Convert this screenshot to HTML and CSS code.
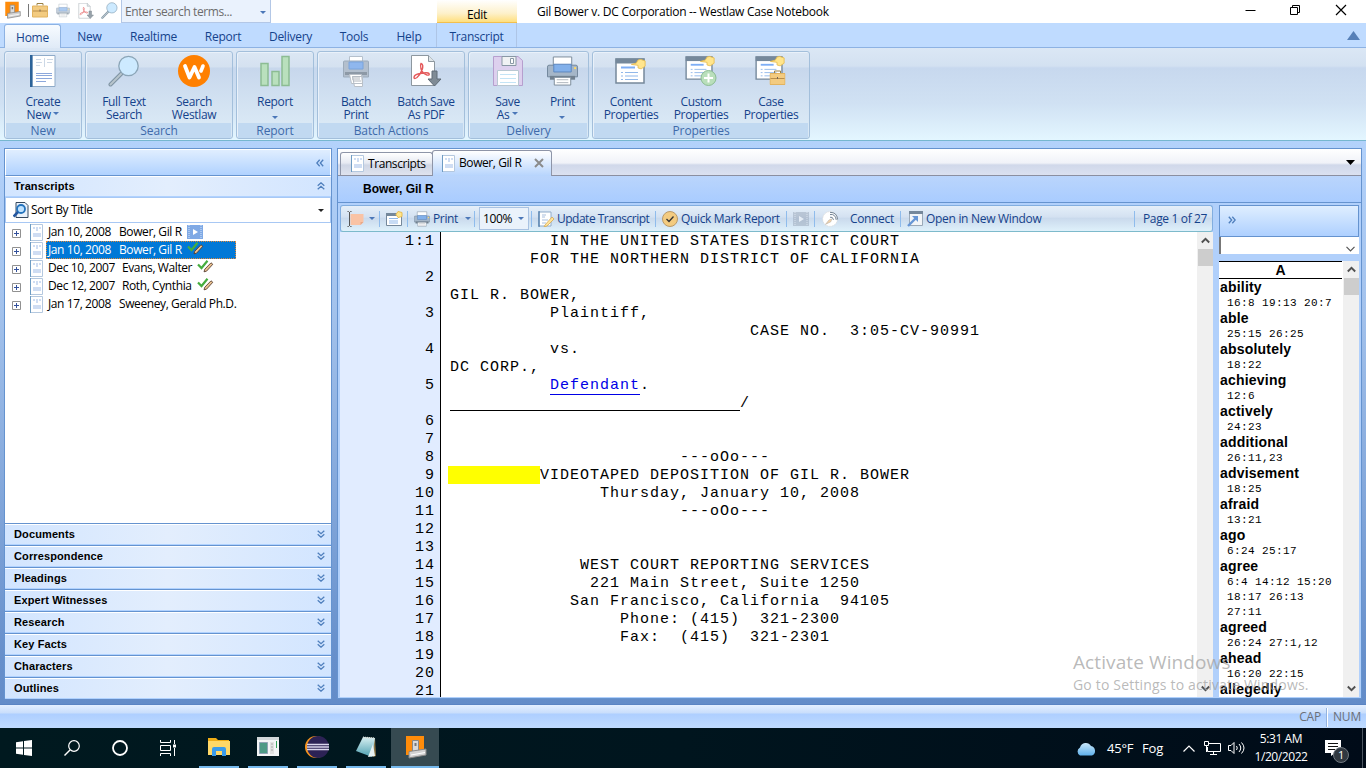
FILE: index.html
```html
<!DOCTYPE html>
<html lang="en">
<head>
<meta charset="utf-8">
<title>Gil Bower v. DC Corporation -- Westlaw Case Notebook</title>
<link rel="stylesheet" href="styles.css">
</head>
<body>
<svg class="defs" width="0" height="0" aria-hidden="true">
<defs>
<linearGradient id="gTeal" x1="0" y1="0" x2="0" y2="1"><stop offset="0" stop-color="#d8f0f2"/><stop offset="1" stop-color="#4c9fb0"/></linearGradient>
<linearGradient id="gCloud" x1="0" y1="0" x2="0" y2="1"><stop offset="0" stop-color="#c9e8fb"/><stop offset="1" stop-color="#5fb0ea"/></linearGradient>
</defs>
<symbol id="app" viewBox="0 0 24 24"><path d="M3 1h18v19H3z" fill="#ff8c0a"/><path d="M9.500 5.500h6v12h-6z" fill="#d9d9d9" stroke="#888"/><path d="M11.500 8h2v3h-2z" fill="#777"/><path d="M6 16.500l17-2.500v6L6 23z" fill="#d2d2d2" stroke="#888"/><path d="M8 20l14-2.500" stroke="#fff"/></symbol>
<symbol id="case" viewBox="0 0 16 16"><path d="M5 3V1h6v2" fill="none" stroke="#9b8145"/><path d="M.5 3.500h15v11H.5z" fill="#f3cb80" stroke="#e2b35f"/><path d="M1 8.500h14" stroke="#b98e4b"/><path d="M7.500 7h1v2h-1z" fill="#765"/></symbol>
<symbol id="printer" viewBox="0 0 32 32"><path d="M6.500 1.500h19v9h-19z" fill="#fff" stroke="#7c8b9a"/><path d="M2 10h28q1.500 0 1.500 2v10H.5V12q0-2 1.500-2z" fill="#a5b6c8" stroke="#72869b"/><path d="M7 9h18v8H7z" fill="#82b0ea" stroke="#5c86bd"/><path d="M3 21h26v4H3z" fill="#71808f"/><path d="M7.500 22.500h17v8h-17z" fill="#fff" stroke="#7c8b9a"/><path d="M10 25h12M10 28h12" stroke="#b0b6bd"/><path d="M28 12h2v2h-2z" fill="#ffd962"/></symbol>
<symbol id="bprinter" viewBox="0 0 26 32"><path d="M6.500 1.500h13v8h-13z" fill="#fff" stroke="#b5c0cc"/><path d="M1.500 6h23q1 0 1 1v15H.5V7q0-1 1-1z" fill="#b3bfcd" stroke="#9cabbb"/><path d="M6 7h14v7H6z" fill="#8fb7ee" stroke="#7ba4dc"/><path d="M2 17h22v3H2z" fill="#8d99a6"/><path d="M9.500 21.500h10v10h-8zM6.500 19.500h12l1 9h-11z" fill="#fff" stroke="#b9c0c8"/><path d="M9 22h8M9 24h8M10 26h8" stroke="#b0b6bd"/></symbol>
<symbol id="pdf" viewBox="0 0 32 32"><path d="M1.500.5h17l6 6v24h-23z" fill="#fff" stroke="#8d979f"/><path d="M18.500.5v6h6" fill="#dfe5e8" stroke="#8d979f"/><path d="M11 8.500q3 1 1 6.500-2 5-5 7.500-3 2-3 0 0-3 6-4 8-1.500 9 0 1 2-2 1.500-4-1-6-6-1-4 0-5.500z" fill="none" stroke="#e4595b" stroke-width="1.400"/><path d="M22 16h5v8h4l-6.500 7-6.500-7h4z" fill="#7f8b95" stroke="#5e6b76"/></symbol>
<symbol id="mag" viewBox="0 0 32 32"><path d="M2.500 29.500L14 18" stroke="#7e93a2" stroke-width="4" stroke-linecap="round"/><path d="M2.500 29.500L14 18" stroke="#b8c5cc" stroke-width="2" stroke-linecap="round"/><circle cx="20.500" cy="11" r="9.700" fill="#cdeaff" stroke="#8ba5b7" stroke-width="1.300"/></symbol>
<symbol id="doc" viewBox="0 0 14 17"><path d="M.5.500h12v16H.5z" fill="#fff" stroke="#b4c8df"/><path d="M.5 0v17" stroke="#6e9cc3"/><path d="M3 3h2v2H3zM6 3h2v4H6zM9 3h2v2H9zM3 9h8v4H3z" fill="#cfddf3"/></symbol>
<symbol id="book" viewBox="0 0 26 32"><path d="M2 .5h23v31H2z" fill="#fff" stroke="#8fabc9"/><path d="M0 0h2.500v32H0z" fill="#2c6399"/><path d="M6 4.500h5M6 7.500h6M6 10.500h4M17 4.500h6M17 7.500h5" stroke="#ccd8e6"/><path d="M14.500 3v9" stroke="#ccd8e6"/><path d="M6 18.500h16M6 20.500h16M6 23.500h16M6 26.500h10" stroke="#8ca8dc"/></symbol>
<symbol id="w" viewBox="0 0 32 32"><circle cx="16" cy="16" r="16" fill="#ff8000"/><path d="M7 11l4.500 11.500L16.500 12l4.500 10.500" fill="none" stroke="#fff" stroke-width="3.800" stroke-linecap="round" stroke-linejoin="round"/><path d="M25 11l-2 5" stroke="#fff" stroke-width="3.600" stroke-linecap="round"/></symbol>
<symbol id="bars" viewBox="0 0 31 31"><path d="M1 8h7v22H1zM12 16h7v14h-7zM22 1h7v29h-7z" fill="#b9e0bd" stroke="#8cbc93" stroke-width="1.500"/></symbol>
<symbol id="save" viewBox="0 0 30 30"><path d="M.5.5H25l4.500 4v25H.5z" fill="#ddd0ee" stroke="#b69fce"/><path d="M9 .5h14v9H9z" fill="#f0f2f4" stroke="#8998a5"/><path d="M17.500 2.500h3v5h-3z" fill="#fff" stroke="#8998a5"/><path d="M4.500 14.500h21v15h-21z" fill="#fff" stroke="#b8c8d2"/><path d="M7 18.500h16M7 22.500h16M7 26.500h16" stroke="#c4e4f6"/></symbol>
<symbol id="hand" viewBox="0 0 17 12"><path d="M.5 6.500L6 5l2-3.500L11 .8l5 1.700v6l-4.500 3-3.500-1V7.500z" fill="#ffe58d" stroke="#e8bd50"/></symbol>
<symbol id="win" viewBox="0 0 31 26"><path d="M1 1h28v24H1z" fill="#fff" stroke="#75889b" stroke-width="1.500"/><path d="M.5.500h29v5H.5z" fill="#75889b"/><path d="M6 9.500h14" stroke="#7eaef5" stroke-width="2"/><path d="M6 14.500h2M10 14.500h13M6 18h2M10 18h13M6 21.500h2M10 21.500h13" stroke="#91b8ea"/></symbol>
<symbol id="p1" viewBox="0 0 32 32"><use href="#win" x="0" y="3" width="31" height="26"/><use href="#hand" x="16" y="3" width="15" height="12"/></symbol>
<symbol id="p2" viewBox="0 0 32 32"><use href="#win" x="0" y="1" width="29" height="24"/><use href="#hand" x="15" y="0" width="15" height="12"/><circle cx="23.500" cy="23" r="7.500" fill="#b9dfbb" stroke="#8cbc93"/><path d="M23.500 18.500v9M19 23h9" stroke="#fff" stroke-width="2"/></symbol>
<symbol id="p3" viewBox="0 0 32 32"><use href="#win" x="0" y="1" width="29" height="24"/><use href="#hand" x="15" y="0" width="15" height="12"/><use href="#case" x="14.500" y="15" width="16" height="16"/></symbol>
<symbol id="dn" viewBox="0 0 8 8"><path d="M.7.800L4 3.700 7.300.8M.7 4.300L4 7.200l3.300-2.900" fill="none" stroke="#4f7fbd" stroke-width="1.300"/></symbol>
<symbol id="marks" viewBox="0 0 17 13"><path d="M1 4.500l3.500 3.500L10.500.8" fill="none" stroke="#45ad3f" stroke-width="2.200"/><path d="M7 11.800l.8-2.600L14 2.800l1.800 1.500-6.300 6.900z" fill="#e8c08f" stroke="#493025" stroke-width=".8"/></symbol>
<symbol id="film" viewBox="0 0 16 14"><path d="M0 0h16v14H0z" fill="#7fa9e5"/><path d="M2 0v14M14 0v14" stroke="#d6e5fb" stroke-dasharray="1 1"/><path d="M6 4l5 3-5 3z" fill="#fff"/></symbol>
<symbol id="chev" viewBox="0 0 9 7"><path d="M.8 5.500L4.500 1.800l3.700 3.700" fill="none" stroke="#505050" stroke-width="1.900"/></symbol>
<symbol id="plus" viewBox="0 0 9 9"><path d="M.5.500h8v8h-8z" fill="#fff" stroke="#919191"/><path d="M2 4.500h5M4.500 2v5" stroke="#33519c"/></symbol>
</svg>

<header class="title">
  <svg class="t-app"><use href="#app"/></svg><i class="t-bar"></i>
  <svg class="t-case"><use href="#case"/></svg>
  <svg class="t-prn"><use href="#printer"/></svg>
  <svg class="t-pdf"><use href="#pdf"/></svg>
  <svg class="t-mag"><use href="#mag"/></svg>
  <div class="search"><span>Enter search terms...</span><b class="tri"></b></div>
  <div class="edit">Edit</div>
  <h1>Gil Bower v. DC Corporation -- Westlaw Case Notebook</h1>
  <svg class="wbtn" viewBox="0 0 102 12"><path d="M.5 6.500h10M45.500 3.500h7v7h-7zM47.500 3.500v-2h7v7h-2" fill="none" stroke="#000"/><path d="M91 1l10 10M101 1L91 11" stroke="#000" stroke-width="1.200"/></svg>
</header>

<nav class="tabs"><a class="on" style="width:57px">Home</a><a style="width:57px">New</a><a style="width:71px">Realtime</a><a style="width:68px">Report</a><a style="width:67px">Delivery</a><a style="width:60px">Tools</a><a style="width:50px">Help</a><a class="ctx">Transcript</a><svg class="up" viewBox="0 0 13 9"><path d="M0 9L6.500 0 13 9z" fill="#5680b8"/></svg></nav>

<section class="ribbon">
  <div class="grp" style="width:78px"><div class="btns"><div class="btn"><svg style="width:26px"><use href="#book"/></svg><span>Create<br>New <b class="tri"></b></span></div></div><footer>New</footer></div>
  <div class="grp" style="width:148px"><div class="btns"><div class="btn"><svg><use href="#mag"/></svg><span>Full Text<br>Search</span></div><div class="btn"><svg><use href="#w"/></svg><span>Search<br>Westlaw</span></div></div><footer>Search</footer></div>
  <div class="grp" style="width:78px"><div class="btns"><div class="btn"><svg style="width:31px"><use href="#bars"/></svg><span>Report<br><b class="tri low"></b></span></div></div><footer>Report</footer></div>
  <div class="grp" style="width:148px"><div class="btns"><div class="btn"><svg style="width:26px"><use href="#bprinter"/></svg><span>Batch<br>Print</span></div><div class="btn"><svg><use href="#pdf"/></svg><span>Batch Save<br>As PDF</span></div></div><footer>Batch Actions</footer></div>
  <div class="grp deliv" style="width:121px"><div class="btns"><div class="btn"><svg style="width:30px"><use href="#save"/></svg><span>Save<br>As <b class="tri"></b></span></div><div class="btn"><svg style="width:31px"><use href="#printer"/></svg><span>Print<br><b class="tri low"></b></span></div></div><footer>Delivery</footer></div>
  <div class="grp" style="width:218px"><div class="btns"><div class="btn"><svg><use href="#p1"/></svg><span>Content<br>Properties</span></div><div class="btn"><svg><use href="#p2"/></svg><span>Custom<br>Properties</span></div><div class="btn"><svg><use href="#p3"/></svg><span>Case<br>Properties</span></div></div><footer>Properties</footer></div>
</section>

<main>
  <aside class="side">
    <div class="side-top"><svg transform="rotate(90)"><use href="#dn"/></svg></div>
    <div class="acc first"><span>Transcripts</span><svg transform="rotate(180)"><use href="#dn"/></svg></div>
    <div class="sort"><svg viewBox="0 0 16 16"><path d="M3 .5h9l3 3v12H3z" fill="#e9f1fb" stroke="#35485e"/><circle cx="8" cy="7" r="4" fill="#bfe2ff" stroke="#2473bd" stroke-width="1.800"/><path d="M5 10l-4.500 4.500" stroke="#2457a0" stroke-width="2.500"/></svg><span>Sort By Title</span><b class="tri blk"></b></div>
    <ul class="tree">
      <li><svg class="pl"><use href="#plus"/></svg><svg class="dc"><use href="#doc"/></svg><p><span style="width:71px">Jan 10, 2008</span><span>Bower, Gil R</span><svg class="fm"><use href="#film"/></svg></p></li>
      <li><svg class="pl"><use href="#plus"/></svg><svg class="dc"><use href="#doc"/></svg><p class="sel"><span style="width:71px">Jan 10, 2008</span><span>Bower, Gil R</span><svg class="mk"><use href="#marks"/></svg></p></li>
      <li><svg class="pl"><use href="#plus"/></svg><svg class="dc"><use href="#doc"/></svg><p><span style="width:74px">Dec 10, 2007</span><span>Evans, Walter</span><svg class="mk"><use href="#marks"/></svg></p></li>
      <li><svg class="pl"><use href="#plus"/></svg><svg class="dc"><use href="#doc"/></svg><p><span style="width:74px">Dec 12, 2007</span><span>Roth, Cynthia</span><svg class="mk"><use href="#marks"/></svg></p></li>
      <li><svg class="pl"><use href="#plus"/></svg><svg class="dc"><use href="#doc"/></svg><p><span style="width:71px">Jan 17, 2008</span><span>Sweeney, Gerald Ph.D.</span></p></li>
    </ul>
    <div class="acc"><span>Documents</span><svg><use href="#dn"/></svg></div>
    <div class="acc"><span>Correspondence</span><svg><use href="#dn"/></svg></div>
    <div class="acc"><span>Pleadings</span><svg><use href="#dn"/></svg></div>
    <div class="acc"><span>Expert Witnesses</span><svg><use href="#dn"/></svg></div>
    <div class="acc"><span>Research</span><svg><use href="#dn"/></svg></div>
    <div class="acc"><span>Key Facts</span><svg><use href="#dn"/></svg></div>
    <div class="acc"><span>Characters</span><svg><use href="#dn"/></svg></div>
    <div class="acc"><span>Outlines</span><svg><use href="#dn"/></svg></div>
  </aside>

  <section class="work">
    <div class="dtabs"><a class="d1"><svg><use href="#doc"/></svg>Transcripts</a><a class="d2"><svg><use href="#doc"/></svg>Bower, Gil R<svg class="x" viewBox="0 0 10 10"><path d="M1 1l8 8M9 1L1 9" stroke="#8b8b8b" stroke-width="2"/></svg></a><svg class="dd" viewBox="0 0 9 5"><path d="M0 0h9L4.500 5z"/></svg></div>
    <div class="cap">Bower, Gil R</div>
    <div class="body">
      <div class="doc">
        <div class="bar">
          <div style="width:39px"><svg style="width:17px" viewBox="0 0 17 16"><path d="M3.500 3h13v8l-3 3h-10z" fill="#f9c3a5"/><path d="M13.500 14v-3h3" fill="#e9a887"/><path d="M.5.500h1l1 1 1-1h1M2.500 1v14M.5 15.500h1l1-1 1 1h1" fill="none" stroke="#555"/></svg><b class="tri" style="margin-left:2px"></b></div>
          <div style="width:28px"><svg style="width:17px" viewBox="0 0 17 16"><path d="M.5 2.500h15v12H.5z" fill="#fff" stroke="#75889b"/><path d="M0 2h11v3H0z" fill="#75889b"/><path d="M3 7.500h9M3 10h9M3 12h9" stroke="#91b8ea"/><path d="M12 .5l4 1v4l-4 1-2-3z" fill="#ffe58d" stroke="#e8bd50"/></svg></div>
          <div style="width:67px"><svg><use href="#printer"/></svg><span>Print</span><b class="tri" style="margin-left:7px"></b></div>
          <div class="zm" style="width:57px"><p><span>100%</span><b class="tri"></b></p></div>
          <div style="width:124px"><svg viewBox="0 0 16 16"><path d="M1 1h12v14H1z" fill="#fff" stroke="#8fabc9"/><path d="M1 0v16" stroke="#2c6399"/><path d="M4 4h4M4 6h3M4 9h6M4 12h4" stroke="#a9bfdd"/><path d="M7 14l7-8 2 2-7 7-3 1z" fill="#ffe39a" stroke="#d5a952" stroke-width=".8"/></svg><span class="upd">Update Transcript</span></div>
          <div style="width:131px"><svg viewBox="0 0 16 16"><circle cx="8" cy="8" r="7.500" fill="#f3cb80" stroke="#b99a69"/><path d="M4.500 8L7 10.500l4.500-5" fill="none" stroke="#333" stroke-width="1.300"/></svg><span>Quick Mark Report</span></div>
          <div style="width:28px"><svg class="gray"><use href="#film"/></svg></div>
          <div style="width:86px"><svg style="width:18px" viewBox="0 0 18 18"><circle cx="9" cy="9" r="8.300" fill="#fff" stroke="#ddd" stroke-dasharray="2 1"/><path d="M4 15l4-5 3-1-1 3z" fill="#f7d3a8" stroke="#b8b0a5" stroke-width=".7"/><path d="M9 7q3-1 4 3M9 4q6-1 7 6M9 1.500q8 0 8.500 8" fill="none" stroke="#6e7f90" stroke-width="1.100"/></svg><span style="margin-left:8px">Connect</span></div>
          <div style="width:234px"><svg viewBox="0 0 16 16"><path d="M2.500 1.500h13v13h-13z" fill="#f2f5f8" stroke="#9aa9b8"/><path d="M2 0h14v3H2z" fill="#75889b"/><path d="M1 15l8-8" stroke="#6796d5" stroke-width="2.400"/><path d="M5 5h6v6z" fill="#6796d5"/></svg><span class="opn">Open in New Window</span></div>
          <div class="pg"><span>Page 1 of 27</span></div>
        </div>
        <div class="view">
          <pre class="nums">1:1

2

3

4

5

6
7
8
9
10
11
12
13
14
15
16
17
18
19
20
21</pre>
<pre class="txt">          IN THE UNITED STATES DISTRICT COURT
        FOR THE NORTHERN DISTRICT OF CALIFORNIA

GIL R. BOWER,
          Plaintiff,
                              CASE NO.  3:05-CV-90991
          vs.
DC CORP.,
          <a>Defendant</a>.
<s></s>/


                       ---oOo---
<mark>         </mark>VIDEOTAPED DEPOSITION OF GIL R. BOWER
               Thursday, January 10, 2008
                       ---oOo---


             WEST COURT REPORTING SERVICES
              221 Main Street, Suite 1250
            San Francisco, California  94105
                 Phone: (415)  321-2300
                 Fax:  (415)  321-2301</pre>
          <div class="sb"><svg><use href="#chev"/></svg><i></i><svg class="flip"><use href="#chev"/></svg></div>
        </div>
      </div>
      <div class="idx">
        <div class="idx-top"><svg transform="rotate(-90)"><use href="#dn"/></svg></div>
        <div class="combo"><svg viewBox="0 0 9 6"><path d="M.5.800l4 4 4-4" fill="none" stroke="#555" stroke-width="1.200"/></svg></div>
        <div class="list">
          <div class="words"><h2>A</h2>
<dl><dt>ability</dt><dd>16:8 19:13 20:7</dd><dt>able</dt><dd>25:15 26:25</dd><dt>absolutely</dt><dd>18:22</dd><dt>achieving</dt><dd>12:6</dd><dt>actively</dt><dd>24:23</dd><dt>additional</dt><dd>26:11,23</dd><dt>advisement</dt><dd>18:25</dd><dt>afraid</dt><dd>13:21</dd><dt>ago</dt><dd>6:24 25:17</dd><dt>agree</dt><dd>6:4 14:12 15:20</dd><dd>18:17 26:13</dd><dd>27:11</dd><dt>agreed</dt><dd>26:24 27:1,12</dd><dt>ahead</dt><dd>16:20 22:15</dd><dt>allegedly</dt></dl></div>
          <div class="sb"><svg><use href="#chev"/></svg><i></i><svg class="flip"><use href="#chev"/></svg></div>
        </div>
      </div>
    </div>
  </section>
</main>

<div class="status"><span>CAP</span><i></i><span>NUM</span></div>

<div class="taskbar">
  <div class="k"><svg viewBox="0 0 16 16" width="16"><path d="M0 2.300L7 1.200v6.300H0zM8 1l8-1v7.500H8zM0 8.500h7v6.300L0 13.700zM8 8.500h8V16l-8-1z" fill="#fff"/></svg></div>
  <div class="k"><svg viewBox="0 0 16 16" width="16"><circle cx="10" cy="6" r="5.300" fill="none" stroke="#fff" stroke-width="1.200"/><path d="M6 10L.5 15.500" stroke="#fff" stroke-width="1.400"/></svg></div>
  <div class="k"><svg viewBox="0 0 16 16" width="16"><circle cx="8" cy="8" r="7" fill="none" stroke="#fff" stroke-width="1.800"/></svg></div>
  <div class="k"><svg viewBox="0 0 16 16" width="16"><path d="M.5 0v2.500h10V0M.5 16v-2.500h10V16M.5 5.500h10v5H.5zM14.500 0v4M14.500 8v8" fill="none" stroke="#fff"/><path d="M13 4.500h3v3h-3z" fill="#fff"/></svg></div>
  <div class="k run a1"><svg viewBox="0 0 22 20" width="22"><path d="M0 1h8l2 2h11v15H0z" fill="#f0ad16"/><path d="M0 4h22v14H0z" fill="#ffd867"/><path d="M4 19v-7q0-2 2-2h10q2 0 2 2v7h-4v-5H8v5z" fill="#3a9bea"/></svg></div>
  <div class="k run a2"><svg viewBox="0 0 22 20" width="22"><path d="M0 0h22v19H0z" fill="#f3f5f6"/><path d="M0 0h22v3H0z" fill="#d2d7da"/><path d="M2.500 5.500h8v11h-8z" fill="#4d9a86" stroke="#8fa3b5"/><path d="M13 5h4v12h-4z" fill="#e1e1e1"/><path d="M14 7h2M14 10h2M14 13h2" stroke="#aaa"/><path d="M19.500 4v7" stroke="#36a35b"/></svg></div>
  <div class="k run a3"><svg viewBox="0 0 24 24" width="24"><circle cx="11" cy="12" r="11" fill="#f7941e"/><circle cx="13" cy="12" r="11" fill="#2c2255"/><path d="M2 9.500h22M2 12h22M2 14.500h22" stroke="#d9d5ec" stroke-width="1.300"/></svg></div>
  <div class="k run a4"><svg viewBox="0 0 24 24" width="24"><path d="M9 2l12 1 1 18-3 1z" fill="#8a7444"/><path d="M9 2l12 1-3 19-16-6z" fill="url(#gTeal)"/><path d="M9 2.500l12 1" stroke="#d5dee0" stroke-width="2" stroke-dasharray="1 1"/><path d="M19 9l2 12-7 1z" fill="#e6f1f2"/></svg></div>
  <div class="k run a5"><svg width="24" height="24"><use href="#app"/></svg></div>
  <svg class="cloud" viewBox="0 0 22 15"><path d="M5 14.500a4.500 4.500 0 010-8A6 6 0 0116 5a5 5 0 011 9.500z" fill="url(#gCloud)"/></svg>
  <span class="wx">45°F</span><span class="wx fog">Fog</span>
  <svg class="caret" viewBox="0 0 12 7"><path d="M.5 6.500L6 1l5.500 5.500" fill="none" stroke="#fff" stroke-width="1.200"/></svg>
  <svg class="net" viewBox="0 0 17 14"><path d="M5 2.500h11.500v8H3.500V6M9.500 11v2M6 13.500h7" fill="none" stroke="#fff"/><path d="M.5.500h4v4h-4zM2.500 5v6" fill="none" stroke="#fff"/></svg>
  <svg class="vol" viewBox="0 0 17 14"><path d="M.5 4.500h2.500l3-3v11l-3-3H.5z" fill="none" stroke="#fff"/><path d="M8.500 5q1.500 2 0 4M11 3q3.500 4 0 8M13.500 1.500q5 5.500 0 11" fill="none" stroke="#fff"/></svg>
  <div class="clock">5:31 AM<br>1/20/2022</div>
  <div class="note"><svg viewBox="0 0 16 16"><path d="M0 0h16v13h-6l-4 3v-3H0z" fill="#fff"/><path d="M3 3.500h10M3 6.500h10M3 9.500h7" stroke="#111"/></svg><em>1</em></div><i class="edge"></i>
</div>

<div class="activate"><strong>Activate Windows</strong><span>Go to Settings to activate Windows.</span></div>
</body>
</html>
```

FILE: styles.css
```css
*{box-sizing:border-box}
body{margin:0;width:1366px;height:768px;overflow:hidden;display:flex;flex-direction:column;position:relative;background:#bfdbff;font:12px/16px "Open Sans","Noto Sans",sans-serif;letter-spacing:-.35px;color:#000}
.defs{position:absolute}
svg{display:block;flex:none}
h1,h2,p,pre,ul,dl,dd{margin:0;padding:0}
.tri{display:inline-block;flex:none;border:3px solid transparent;border-top-color:#4b77b8;border-bottom:0;width:0;height:0}
.tri.blk{border-top-color:#222}
/* title bar */
.title{height:23px;background:#fff;display:flex;flex:none}
.t-app{width:18px;height:18px;margin:1px 0 0 3px}
.t-bar{width:1px;height:13px;background:#777;margin:4px 3px 0 7px}
.t-case{width:16px;height:17px;margin-top:2px}
.t-prn{width:14px;height:17px;margin:2px 0 0 8px;opacity:.65}
.t-pdf{width:16px;height:16px;margin:3px 0 0 8px;opacity:.8}
.t-mag{width:17px;height:17px;margin:2px 0 0 7px}
.search{width:150px;height:23px;margin-left:3px;border:1px solid #b3c7e6;border-top:0;background:#eaf2fd;color:#6c6c6c;display:flex;align-items:center;justify-content:space-between;padding:2px 4px 0 3px;font-size:12px;letter-spacing:-.4px}
.edit{width:80px;height:23px;margin-left:166px;background:linear-gradient(#fff,#fdf1cb 60%,#ffdf7d);border-bottom:1px solid #f3bf4d;text-align:center;line-height:30px}
h1{font-weight:400;font-size:12px;line-height:24px;margin-left:20px;width:680px;letter-spacing:-.26px}
.wbtn{width:102px;height:12px;margin:4px 0 0 28px}
.tabs{height:25px;flex:none;background:#bfdbff;display:flex;padding-left:4px;border-bottom:1px solid #8db2e3;color:#15428b}
.tabs a{text-align:center;line-height:28px;letter-spacing:-.25px}
.tabs .on{height:25px;background:linear-gradient(#f7fbff,#dfeaf7);border:1px solid #8db2e3;border-bottom:0;border-radius:3px 3px 0 0;margin-top:1px;line-height:25px}
.tabs .ctx{width:81px;margin-left:2px;border:solid #aec5e6;border-width:0 1px}
.up{width:13px;height:9px;margin:8px 0 0 830px}
/* ribbon */
.ribbon{height:93px;flex:none;padding:3px 3px 1px 4px;display:flex;gap:3px;background:linear-gradient(#dbe7f5 0,#d3e1f1 18px,#c7d8ee 20px,#d0e1f3 55px,#e3f6ff);border-bottom:1px solid #76b7cf}
.grp{flex:none;height:88px;border:1px solid #a3bfdb;border-radius:3px;box-shadow:inset 1px 1px #e9f1fa;display:flex;flex-direction:column;background:linear-gradient(#dce7f4 0,#d4e1f0 15px,#c7d7ec 16px,#d9e8f5 70px)}
.btns{flex:1;display:flex;justify-content:center;color:#15428b}
.btn{width:70px;text-align:center;display:flex;flex-direction:column;align-items:center;line-height:13px;padding-top:3px}
.deliv .btns{justify-content:flex-start;padding-left:9px}
.deliv .btn:first-child{width:59px}
.deliv .btn+.btn{width:51px}
.btn svg{width:32px;height:32px;margin-bottom:8px}
.btn .tri{vertical-align:4px}
.btn .tri.low{vertical-align:0}
.grp footer{height:15px;background:#c1d9f1;color:#3e6aaa;text-align:center;line-height:16px;letter-spacing:-.1px;margin:0 1px}
/* main area */
main{height:563px;flex:none;display:flex;padding:7px 4px 5px;gap:5px;background:linear-gradient(#b3d2fb,#a3c2ec 30%,#668fcb 92%,#638cc8)}
.side{width:328px;height:551px;border:1px solid #6593cf;border-bottom:0;display:flex;flex-direction:column;background:#fff}
.side-top{height:27px;border:1px solid #fff;border-bottom:1px solid #6593cf;background:linear-gradient(#e0eeff,#b0d2ff);display:flex;justify-content:flex-end;align-items:center;padding-right:6px}
.side-top svg,.acc svg{width:8px;height:8px}
.acc{height:22px;border-top:1px solid #6593cf;border-bottom:1px solid #b0d2ff;box-shadow:inset 0 1px #fff;background:linear-gradient(90deg,#d2e5ff,#e3eefd 50%,#d2e5ff);display:flex;justify-content:space-between;align-items:center;padding:0 6px 0 9px;font:bold 11px/20px "Liberation Sans",sans-serif;letter-spacing:.12px}
.acc.first{border-top:0;height:21px}
.sort{height:26px;border:1px solid #a8c8f4;display:flex;align-items:center;padding:0 6px 0 7px}
.sort svg{width:16px;height:16px;margin-right:2px}
.sort span{flex:1;letter-spacing:-.38px}
.tree{flex:1;list-style:none}
.tree li{height:18px;display:flex;align-items:center}
.pl{width:9px;height:9px;margin:3px 9px 0 7px}
.dc{width:14px;height:17px;margin-right:1px}
.tree p{display:flex;height:18px;line-height:17px;margin-left:1px;padding-left:2px}
.tree p span{white-space:pre;letter-spacing:-.4px}
.tree .sel{width:190px;background:#0078d7;color:#fff;outline:1px dotted #e08a3c;outline-offset:-1px}
.fm{width:16px;height:14px;margin:2px 0 0 5px}
.mk{width:17px;height:13px;margin:1px 0 0 5px}
.work{width:1025px;height:551px;border:1px solid #6593cf;background:#b1d0fb}
.dtabs{height:27px;background:linear-gradient(#fff,#f0f2f8 14px,#d0d8ea 16px,#dbe1f0);border-bottom:1px solid #8b8fa0;display:flex;padding-left:2px;letter-spacing:-.42px}
.dtabs a{display:flex;align-items:center;border:1px solid #8e95a8;border-bottom:0;border-radius:3px 3px 0 0;padding-bottom:1px}
.d1{width:93px;height:23px;margin-top:3px;padding-left:10px;background:linear-gradient(#fff,#e7eaf2 45%,#cfd6e5 55%,#dfe3ee)}
.dtabs .d2{width:120px;height:26px;margin-top:1px;padding-left:9px;background:linear-gradient(#fff,#b6d4fd);margin-left:-1px}
.dtabs a svg{width:14px;height:17px;margin-right:3px}
.dtabs a .x{width:10px;height:10px;margin-left:13px}
.dd{width:9px;height:5px;margin:11px 0 0 794px}
.cap{height:27px;background:linear-gradient(#bad5fc,#a9ccff);border-bottom:1px solid #6593cf;font:bold 12px/26px "Liberation Sans",sans-serif;letter-spacing:0;padding-left:25px}
.body{display:flex;gap:6px;padding:2px 1px 0 2px;height:494px}
.doc{width:873px}
.bar{height:27px;display:flex;align-items:center;border:1px solid #82aee0;border-bottom-color:#7dbacb;border-radius:3px;background:linear-gradient(#e5eff9,#d3e1f1 45%,#c9d9ec 48%,#dff1fb);color:#15428b}
.bar>div{height:16px;display:flex;align-items:center;padding-left:6px;border-right:1px solid #8fbcec;flex:none;white-space:nowrap}
.bar svg{width:16px;height:16px;margin-right:3px}
.bar>div:last-child{border:0;padding-left:8px}
.bar .zm{padding-left:4px}
.upd{letter-spacing:-.5px}
.opn{letter-spacing:-.3px}
.zm p{width:50px;height:23px;flex:none;background:#eaf2fb;border:1px solid #a9c2e2;display:flex;align-items:center;justify-content:space-between;padding:0 4px 0 3px;color:#000}
.gray{filter:grayscale(.7);opacity:.5}
.view{height:465px;background:#fff;display:flex;overflow:hidden}
.view pre{font:15px/18px "Liberation Mono",monospace;letter-spacing:.998px;padding-top:1px}
.nums{width:101px;background:#e1ecff;border-right:1px solid #000;text-align:right;padding-right:5px}
.txt{width:756px;padding-left:9px}
.txt a{color:#0000e6;border-bottom:1px solid #0000e6}
.txt s{display:inline-block;width:290px;border-bottom:1px solid #000;height:1px;vertical-align:-4px}
.txt mark{background:#ff0;padding:1px 0 0 2px;margin-left:-2px}
.sb{width:16px;background:#f0f0f0;display:flex;flex-direction:column;align-items:center}
.sb i{width:15px;height:17px;background:#cdcdcd}
.sb svg{width:9px;height:7px;margin:5px 0}
.sb .flip{transform:rotate(180deg);margin:auto 0 5px}
.idx{width:140px}
.idx-top{height:32px;border:1px solid #6593cf;background:linear-gradient(#dfeeff,#aed0ff);padding:10px 8px}
.idx-top svg{width:8px;height:8px}
.combo{height:17px;background:#fff;border-left:2px solid #777;display:flex;justify-content:flex-end;align-items:flex-end;padding:0 4px 2px}
.combo svg{width:9px;height:6px}
.list{height:436px;margin-top:7px;background:#fff;display:flex;overflow:hidden}
.words{width:124px;letter-spacing:0}
h2{font:bold 14px/16px "Liberation Sans",sans-serif;width:123px;height:18px;border:solid #000;border-width:1px 0;text-align:center}
dt{font:bold 14px/16px "Liberation Sans",sans-serif;height:16px;padding-left:1px;letter-spacing:.2px}
dd{font:11px/15px "Liberation Mono",monospace;letter-spacing:.4px;padding-left:8px;height:15px;white-space:pre;position:relative;top:1px}
.status{height:24px;flex:none;border-top:1px solid #5a84c3;background:linear-gradient(#e3efff,#c9defb 8px,#aecfff 9px,#bfdbff);display:flex;justify-content:flex-end;align-items:center;color:#6c7078;gap:5px;padding:1px 5px 0 0;letter-spacing:-.2px}
.status i{width:2px;height:19px;border-left:1px solid #93b3df;background:#fff}
.taskbar{height:40px;flex:none;background:linear-gradient(90deg,#00191f,#00151e 50%,#000b18);display:flex;color:#fff;align-items:center}
.k{width:48px;height:40px;display:flex;align-items:center;justify-content:center;flex:none}
.k svg{height:auto;max-height:24px}
.run{width:40px;border-bottom:2px solid #76b9ed}
.a1{margin-left:7px}
.a2{margin-left:9px}
.a3{margin-left:9px}
.a4{margin-left:9px}
.a5{margin-left:5px;width:48px;background:#364a51}
.cloud{width:22px;height:15px;margin-left:636px}
.wx{font-size:13px;margin-left:10px;letter-spacing:-.2px;width:26px}
.fog{margin-left:9px;width:22px}
.caret{width:12px;height:7px;margin-left:19px}
.net{width:17px;height:14px;margin-left:9px}
.vol{width:17px;height:14px;margin-left:7px}
.clock{width:60px;margin-left:6px;text-align:center;line-height:18px;white-space:nowrap;letter-spacing:-.42px}
.note{width:26px;height:24px;margin-left:14px;position:relative}
.note svg{width:16px;height:16px;margin-top:4px}
.note em{position:absolute;left:8px;top:11px;width:16px;height:16px;border:1px solid #707880;border-radius:50%;background:#303840;font:11px/14px "Open Sans",sans-serif;text-align:center}
.edge{width:1px;height:40px;background:#4b5560;margin-left:11px}
.activate{position:absolute;left:1073px;top:650px;color:#a0a0a0bb;white-space:nowrap}
.activate strong{display:block;font:400 19px/25px "Open Sans",sans-serif;letter-spacing:.1px}
.activate span{display:block;font-size:14px;line-height:20px;letter-spacing:.18px}
```
